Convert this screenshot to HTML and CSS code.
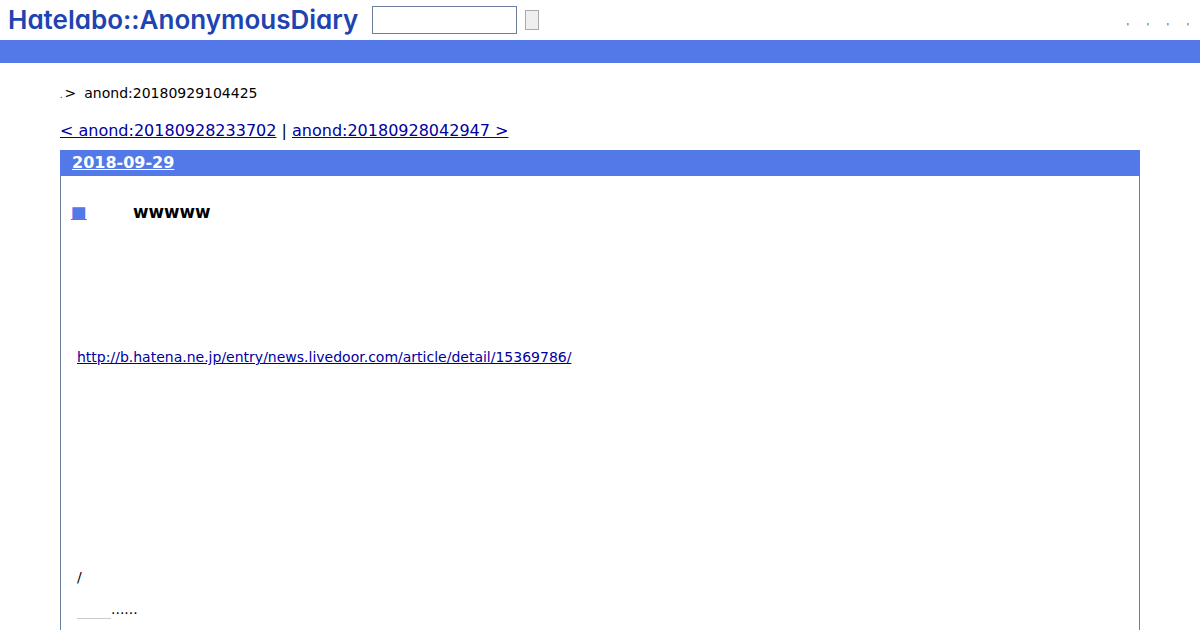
FILE: index.html
```html
<!DOCTYPE html>
<html lang="en">
<head>
    <meta charset="UTF-8">
    <meta name="viewport" content="width=device-width, initial-scale=1.0">
    <title>anond:20180929104425</title>

    <link rel="stylesheet" href="styles.css">
</head>
<body>

    <header class="top">
        <a class="logo" href="#">Hatelabo::AnonymousDiary</a>
        <form class="search">
            <input type="text" class="search-box">
            <button type="button" class="search-btn"></button>
        </form>
        <nav class="top-links">
            <a href="#">'</a>
            <a href="#">'</a>
            <a href="#">'</a>
            <a href="#">'</a>
        </nav>
    </header>
    <div class="bar"></div>

    <p class="crumb"><span class="crumb-dot">.</span><span class="crumb-gt">&gt;</span><span>anond:20180929104425</span></p>

    <p class="pager"><a href="#">&lt; anond:20180928233702</a> | <a href="#">anond:20180928042947 &gt;</a></p>

    <section class="day">
        <h2 class="day-title"><a href="#">2018-09-29</a></h2>
        <div class="day-body">
            <h3 class="entry-title"><a class="mark" href="#">■</a><span>wwwww</span></h3>
            <p class="entry-link"><a href="#">http://b.hatena.ne.jp/entry/news.livedoor.com/article/detail/15369786/</a></p>
            <p class="entry-slash">/</p>
            <p class="entry-dots"><span class="blank-line"></span>......</p>
        </div>
    </section>

</body>
</html>
```

FILE: styles.css
```css
html, body {
    height: 630px;
    overflow: hidden;
}

body {
    margin: 0;
    padding: 0;
    font-family: "DejaVu Sans", sans-serif;
    color: #000;
    background: #fff;
}

a {
    color: #0000a0;
}

.top {
    display: flex;
    align-items: center;
    height: 40px;
    padding-left: 8px;
}

.logo {
    width: 350px;
    margin-top: -2px;
    font-family: Inter, "Liberation Sans", sans-serif;
    font-feature-settings: "cv11";
    font-size: 26px;
    font-weight: 600;
    letter-spacing: 0;
    white-space: nowrap;
    color: #2043b2;
    text-decoration: none;
}

.search {
    display: flex;
    align-items: center;
    margin-left: 14px;
}

.search-box {
    box-sizing: border-box;
    width: 145px;
    height: 28px;
    margin: 0;
    border: 1px solid #6b7f9c;
    background: #fff;
}

.search-btn {
    box-sizing: border-box;
    width: 14px;
    height: 20px;
    margin: 0 0 0 8px;
    padding: 0;
    border: 1px solid #aaa;
    background: #efefef;
}

.top-links {
    display: flex;
    margin-left: auto;
    padding-right: 11px;
    padding-top: 15px;
    font-size: 8px;
}

.top-links a {
    width: 20px;
    text-align: right;
    color: #000;
    text-decoration: none;
}

.bar {
    height: 23px;
    background: #5279e7;
}

.crumb {
    display: flex;
    align-items: baseline;
    margin: 21px 60px 0;
    font-size: 14px;
    line-height: 18px;
}

.crumb-dot {
    font-size: 8px;
}

.crumb-gt {
    margin: 0 8px 0 2px;
}

.pager {
    margin: 16px 60px 0;
    font-size: 16px;
    line-height: 20px;
}

.day {
    box-sizing: border-box;
    margin: 9px 60px 0;
    border: 1px solid #6b7f9c;
    border-top: 0;
    min-height: 600px;
}

.day-title {
    margin: 0 -1px;
    padding: 0 12px;
    height: 26px;
    line-height: 26px;
    font-size: 16px;
    background: #5279e7;
}

.day-title a {
    color: #fff;
}

.day-body {
    padding: 0 16px;
}

.entry-title {
    display: flex;
    align-items: baseline;
    margin: 26px 0 0 -6px;
    font-size: 16.8px;
    line-height: 20px;
}

.mark {
    width: 62px;
    color: #5279e7;
    flex-shrink: 0;
}

.entry-link {
    margin: 126px 0 0;
    font-size: 14px;
    line-height: 18px;
}

.entry-slash {
    margin: 202px 0 0;
    font-size: 14px;
    line-height: 18px;
}

.entry-dots {
    display: flex;
    align-items: baseline;
    margin: 14px 0 0;
    font-size: 14px;
    line-height: 18px;
}

.blank-line {
    width: 34px;
    height: 10px;
    border-bottom: 1px solid #ccc;
    position: relative;
    top: 5px;
}
```
